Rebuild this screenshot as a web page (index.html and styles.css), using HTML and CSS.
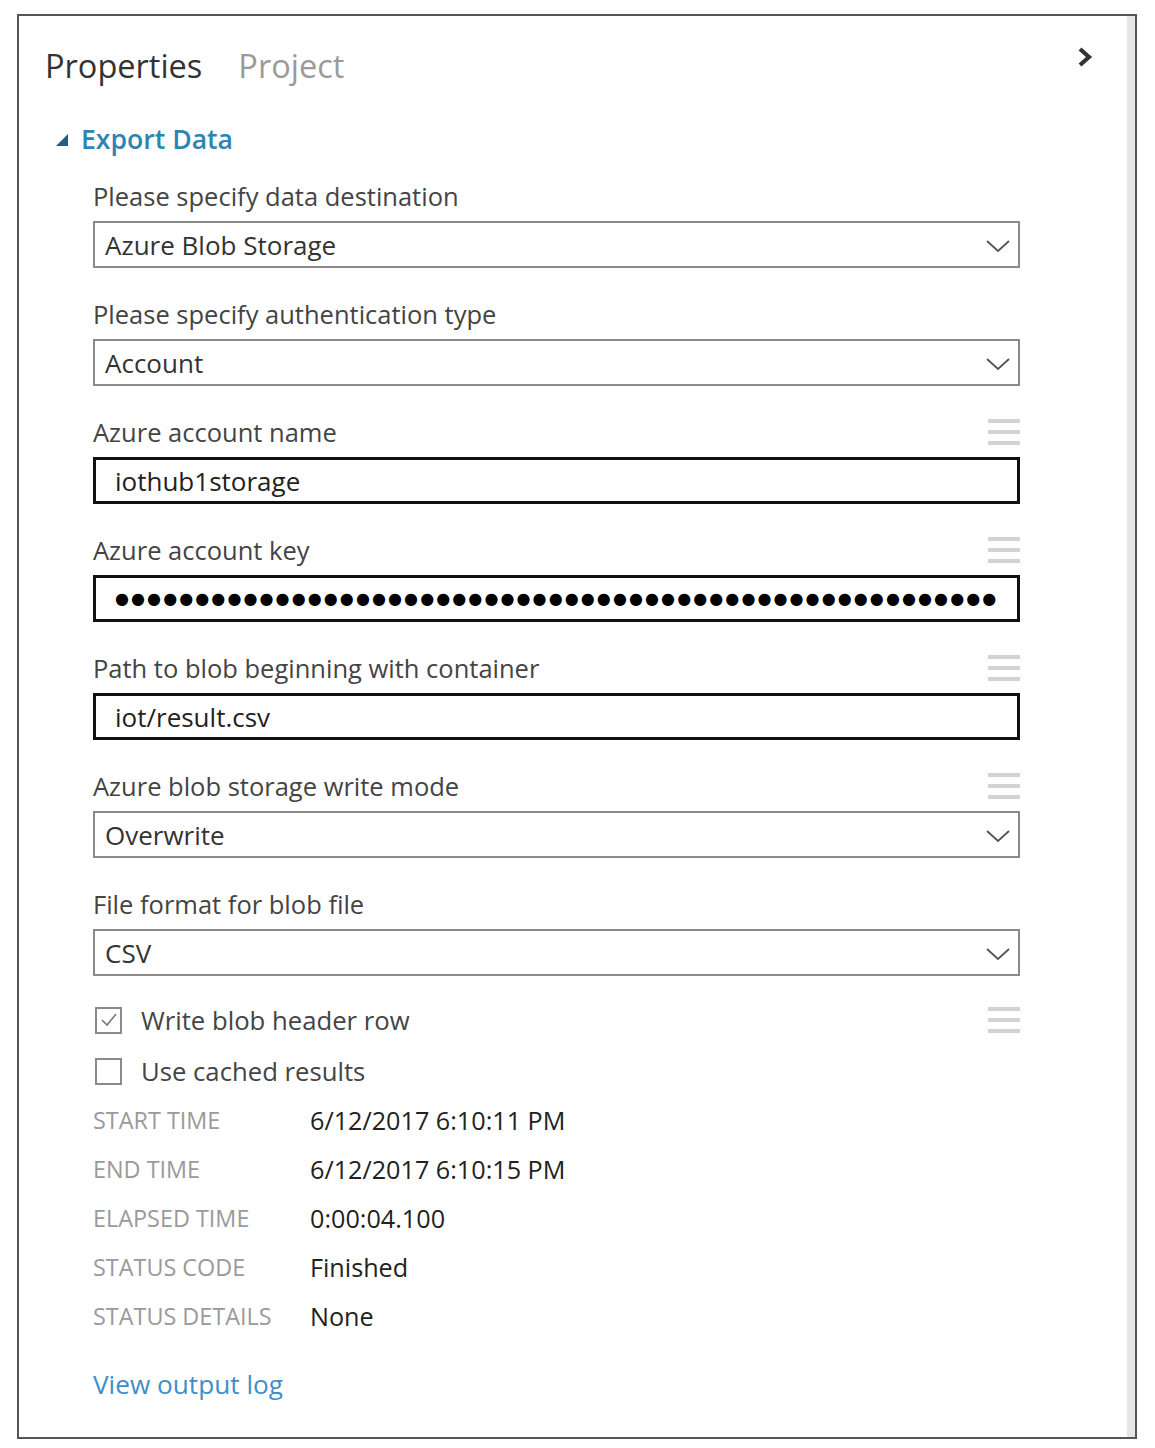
FILE: index.html
```html
<!DOCTYPE html>
<html>
<head>
<meta charset="utf-8">
<link rel="stylesheet" href="styles.css">
</head>
<body>
<div class="panel">
  <div class="content">
    <div class="tabs">
      <div class="tab-list">
        <span class="tab active">Properties</span>
        <span class="tab">Project</span>
      </div>
      <svg class="collapse" width="16" height="22" viewBox="0 0 16 22"><path d="M3 3 L12 11 L3 19" fill="none" stroke="#333" stroke-width="4.2"/></svg>
    </div>
    <div class="section-title">
      <svg class="tri" width="14" height="14" viewBox="0 0 14 14"><polygon points="13,1 13,13 1,13" fill="#1e5f87"/></svg>
      <span>Export Data</span>
    </div>
    <div class="form">
      <div class="field">
        <div class="field-head"><span class="label">Please specify data destination</span></div>
        <div class="select"><span>Azure Blob Storage</span><svg class="chev" width="24" height="14" viewBox="0 0 24 14"><path d="M1 2 L12 12 L23 2" fill="none" stroke="#555" stroke-width="1.8"/></svg></div>
      </div>
      <div class="field">
        <div class="field-head"><span class="label">Please specify authentication type</span></div>
        <div class="select"><span>Account</span><svg class="chev" width="24" height="14" viewBox="0 0 24 14"><path d="M1 2 L12 12 L23 2" fill="none" stroke="#555" stroke-width="1.8"/></svg></div>
      </div>
      <div class="field">
        <div class="field-head"><span class="label">Azure account name</span><span class="handle"><i></i><i></i><i></i></span></div>
        <div class="input"><span>iothub1storage</span></div>
      </div>
      <div class="field">
        <div class="field-head"><span class="label">Azure account key</span><span class="handle"><i></i><i></i><i></i></span></div>
        <div class="input"><span class="mask">●●●●●●●●●●●●●●●●●●●●●●●●●●●●●●●●●●●●●●●●●●●●●●●●●●●●●●●</span></div>
      </div>
      <div class="field">
        <div class="field-head"><span class="label">Path to blob beginning with container</span><span class="handle"><i></i><i></i><i></i></span></div>
        <div class="input"><span>iot/result.csv</span></div>
      </div>
      <div class="field">
        <div class="field-head"><span class="label">Azure blob storage write mode</span><span class="handle"><i></i><i></i><i></i></span></div>
        <div class="select"><span>Overwrite</span><svg class="chev" width="24" height="14" viewBox="0 0 24 14"><path d="M1 2 L12 12 L23 2" fill="none" stroke="#555" stroke-width="1.8"/></svg></div>
      </div>
      <div class="field">
        <div class="field-head"><span class="label">File format for blob file</span></div>
        <div class="select"><span>CSV</span><svg class="chev" width="24" height="14" viewBox="0 0 24 14"><path d="M1 2 L12 12 L23 2" fill="none" stroke="#555" stroke-width="1.8"/></svg></div>
      </div>
      <div class="checks">
        <div class="check-row">
          <span class="box"><svg width="22" height="22" viewBox="0 0 22 22"><path d="M4 11 L9 16 L18 5" fill="none" stroke="#777" stroke-width="1.6"/></svg></span>
          <span class="check-label">Write blob header row</span>
          <span class="handle"><i></i><i></i><i></i></span>
        </div>
        <div class="check-row">
          <span class="box"></span>
          <span class="check-label">Use cached results</span>
        </div>
      </div>
      <div class="details">
        <span class="dk">START TIME</span><span class="dv">6/12/2017 6:10:11 PM</span>
        <span class="dk">END TIME</span><span class="dv">6/12/2017 6:10:15 PM</span>
        <span class="dk">ELAPSED TIME</span><span class="dv">0:00:04.100</span>
        <span class="dk">STATUS CODE</span><span class="dv">Finished</span>
        <span class="dk">STATUS DETAILS</span><span class="dv">None</span>
      </div>
      <a class="log" href="#">View output log</a>
    </div>
  </div>
  <div class="scrollbar"></div>
</div>
</body>
</html>
```
FILE: styles.css
```css
* { box-sizing: border-box; }
body {
  margin: 0;
  background: #fff;
  font-family: "Open Sans", "Noto Sans", sans-serif;
  color: #333;
}
.panel {
  margin: 14px 0 0 17px;
  width: 1120px;
  height: 1425px;
  border: 2px solid #555;
  display: flex;
}
.content {
  flex: 1;
  padding: 26px 34px 0 26px;
  min-width: 0;
}
.scrollbar {
  width: 8px;
  background: #e6e6e6;
}
.tabs {
  display: flex;
  justify-content: space-between;
  align-items: flex-start;
  height: 48px;
}
.tab-list { display: flex; gap: 36px; }
.tab {
  font-size: 32.5px;
  line-height: 48px;
  color: #9a9a9a;
}
.tab.active { color: #333; }
.collapse { margin-top: 4px; }
.section-title {
  margin-top: 29px;
  margin-left: 10px;
  display: flex;
  align-items: center;
  gap: 12px;
  height: 40px;
  font-size: 26.6px;
  font-weight: 600;
  color: #2b86b3;
}
.section-title .tri { margin-top: 2px; }
.form {
  margin-left: 48px;
  width: 927px;
  margin-top: 21px;
}
.field { margin-bottom: 30px; }
.field-head {
  display: flex;
  justify-content: space-between;
  align-items: center;
  height: 32px;
  margin-bottom: 9px;
}
.label {
  font-size: 25.5px;
  color: #444;
  white-space: nowrap;
}
.handle {
  display: flex;
  flex-direction: column;
  gap: 7px;
  width: 32px;
  flex: none;
}
.handle i {
  display: block;
  height: 4px;
  background: #d3d3d3;
}
.select {
  height: 47px;
  border: 2px solid #8a8a8a;
  display: flex;
  align-items: center;
  justify-content: space-between;
  padding: 0 8px 0 10px;
  font-size: 26px;
  color: #333;
}
.chev { margin-top: 2px; }
.input {
  height: 47px;
  border: 3px solid #111;
  display: flex;
  align-items: center;
  padding: 0 0 0 19px;
  font-size: 26px;
  color: #222;
  overflow: hidden;
  white-space: nowrap;
}
.mask {
  font-family: "DejaVu Sans", sans-serif;
  font-size: 16px;
  letter-spacing: 2.1px;
  color: #000;
}
.checks {
  margin-top: -6px;
  display: flex;
  flex-direction: column;
  gap: 11px;
}
.check-row {
  display: flex;
  align-items: center;
  height: 40px;
}
.box {
  width: 27px;
  height: 27px;
  border: 2px solid #8a8a8a;
  margin-left: 2px;
  display: flex;
  align-items: center;
  justify-content: center;
  flex: none;
}
.check-label {
  flex: 1;
  margin-left: 19px;
  font-size: 25.7px;
  color: #444;
}
.details {
  margin-top: 4px;
  display: grid;
  grid-template-columns: 217px 1fr;
  grid-auto-rows: 49px;
  align-items: center;
}
.dk {
  font-size: 23.4px;
  color: #9a9a9a;
}
.dv {
  font-size: 25.2px;
  color: #222;
}
.log {
  display: block;
  margin-top: 26px;
  font-size: 26.2px;
  color: #3d8fc9;
  text-decoration: none;
}
```
